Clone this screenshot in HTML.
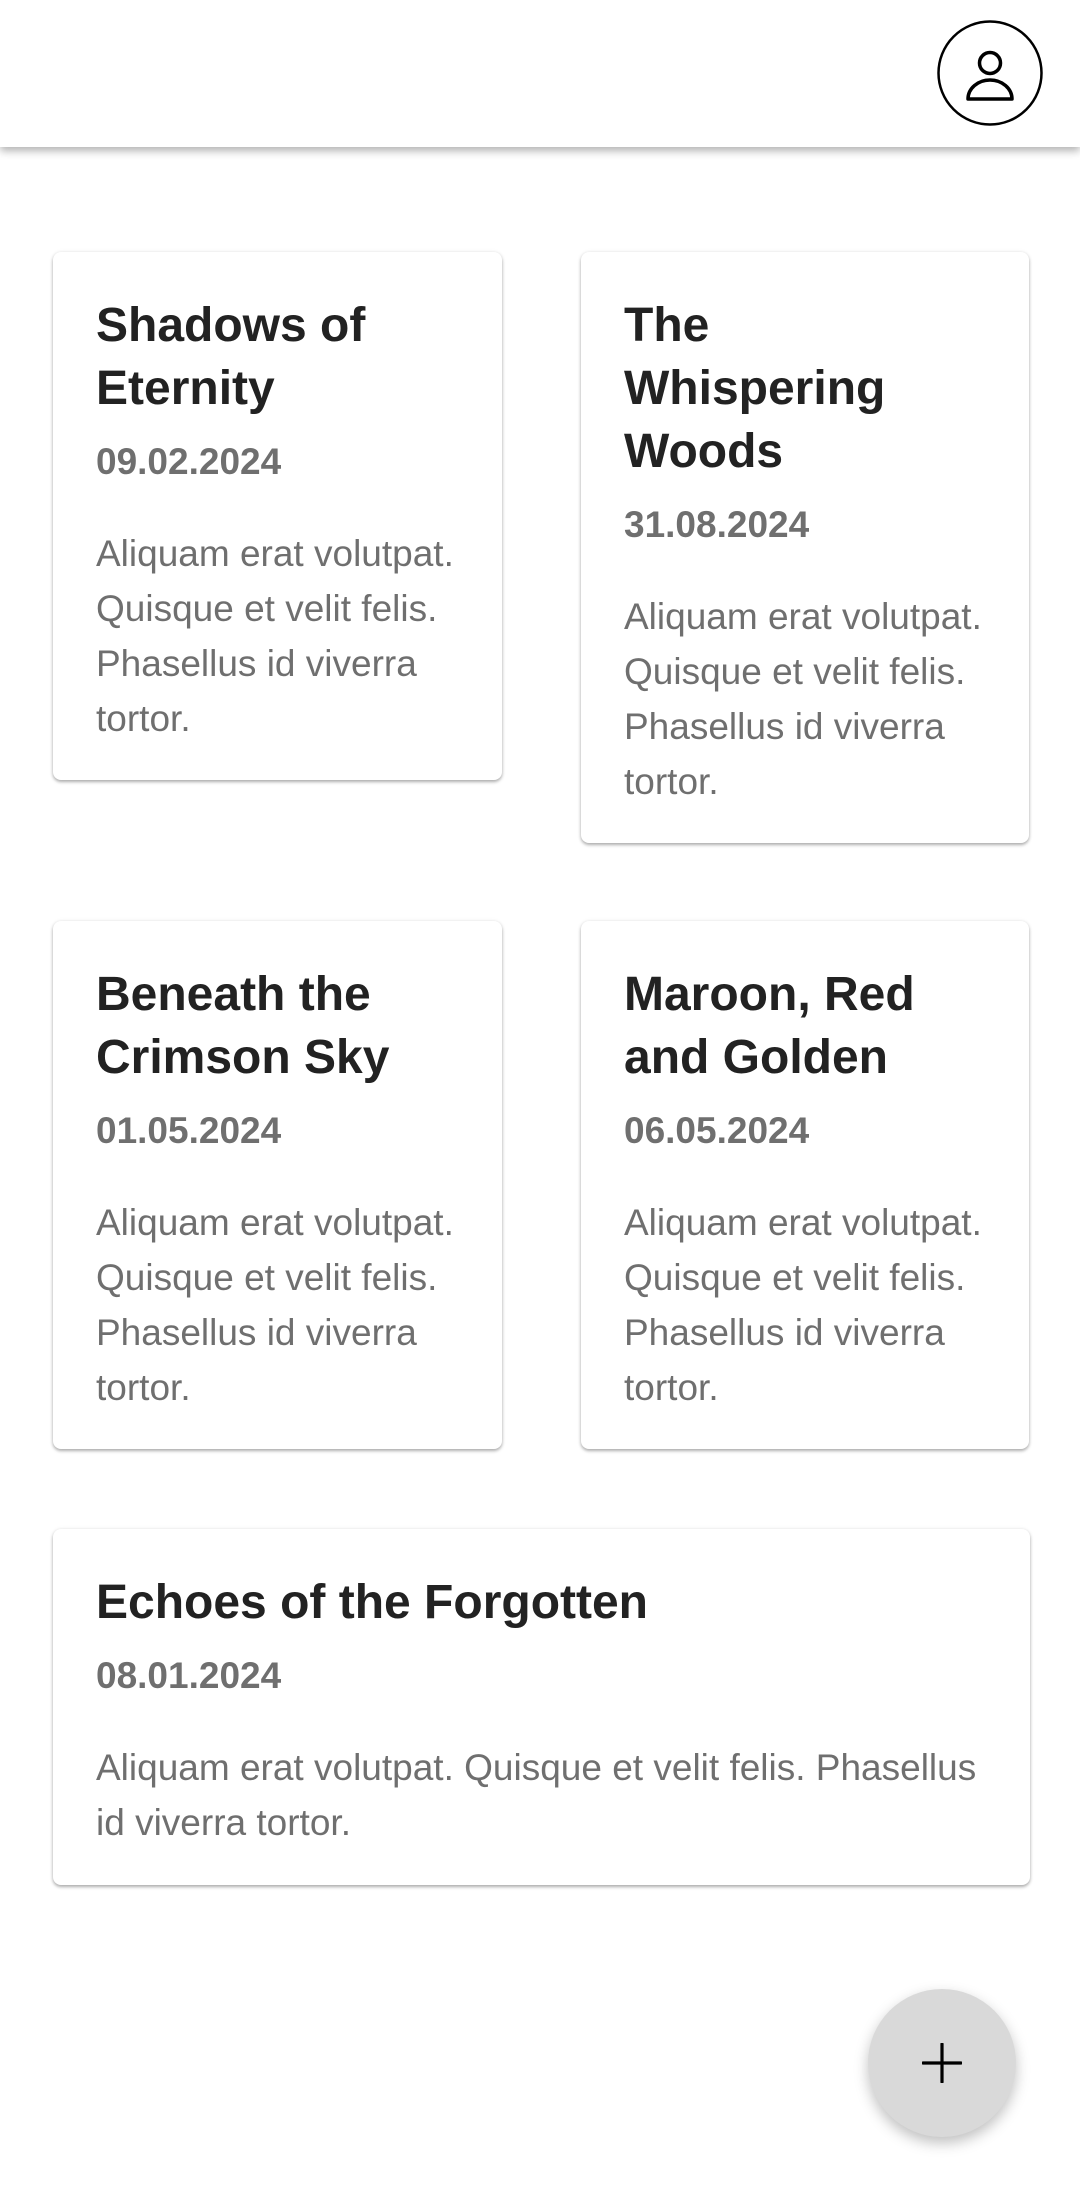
<!DOCTYPE html>
<html><head><meta charset="utf-8"><style>
*{margin:0;padding:0;box-sizing:border-box}
body{width:1080px;height:2200px;background:#fff;position:relative;overflow:hidden;font-family:"Liberation Sans",sans-serif}
.hdr{position:absolute;left:0;top:0;width:1080px;height:147px;background:#fff;box-shadow:0 4px 8px rgba(0,0,0,.3)}
.card{position:absolute;background:#fff;border-radius:8px;box-shadow:0 2px 3px rgba(0,0,0,.3),0 0 4px rgba(0,0,0,.08);padding:42px 43px 0 43px}
.t{font-size:48px;font-weight:bold;line-height:63px;color:#222}
.d{font-size:37px;font-weight:bold;line-height:48px;color:#6f6f6f;margin-top:18px}
.b{font-size:37px;line-height:55px;color:#6f6f6f;margin-top:40px}
.fab{position:absolute;left:868px;top:1989px;width:148px;height:148px;border-radius:50%;background:#d9d9d9;box-shadow:0 6px 14px rgba(0,0,0,.25)}
</style></head><body>
<div class="hdr">
<svg style="position:absolute;left:936px;top:19px" width="108" height="108" viewBox="0 0 108 108">
<circle cx="54" cy="54" r="51.5" fill="none" stroke="#000" stroke-width="2.5"/>
<circle cx="54" cy="44" r="10.5" fill="none" stroke="#000" stroke-width="3.5"/>
<path d="M32 80 A22 19 0 0 1 76 80 Z" fill="none" stroke="#000" stroke-width="3.5" stroke-linejoin="round"/>
</svg>
</div>
<div class="card" style="left:53px;top:252px;width:449px;height:528px">
<div class="t">Shadows of<br>Eternity</div><div class="d">09.02.2024</div>
<div class="b">Aliquam erat volutpat.<br>Quisque et velit felis.<br>Phasellus id viverra<br>tortor.</div></div>
<div class="card" style="left:581px;top:252px;width:448px;height:591px">
<div class="t">The<br>Whispering<br>Woods</div><div class="d">31.08.2024</div>
<div class="b">Aliquam erat volutpat.<br>Quisque et velit felis.<br>Phasellus id viverra<br>tortor.</div></div>
<div class="card" style="left:53px;top:921px;width:449px;height:528px">
<div class="t">Beneath the<br>Crimson Sky</div><div class="d">01.05.2024</div>
<div class="b">Aliquam erat volutpat.<br>Quisque et velit felis.<br>Phasellus id viverra<br>tortor.</div></div>
<div class="card" style="left:581px;top:921px;width:448px;height:528px">
<div class="t">Maroon, Red<br>and Golden</div><div class="d">06.05.2024</div>
<div class="b">Aliquam erat volutpat.<br>Quisque et velit felis.<br>Phasellus id viverra<br>tortor.</div></div>
<div class="card" style="left:53px;top:1529px;width:977px;height:356px">
<div class="t">Echoes of the Forgotten</div><div class="d">08.01.2024</div>
<div class="b">Aliquam erat volutpat. Quisque et velit felis. Phasellus<br>id viverra tortor.</div></div>
<div class="fab"><svg style="position:absolute;left:54px;top:54px" width="40" height="40" viewBox="0 0 40 40"><path d="M1 20H39M20 1V39" stroke="#000" stroke-width="3.2" stroke-linecap="round"/></svg></div>
</body></html>
